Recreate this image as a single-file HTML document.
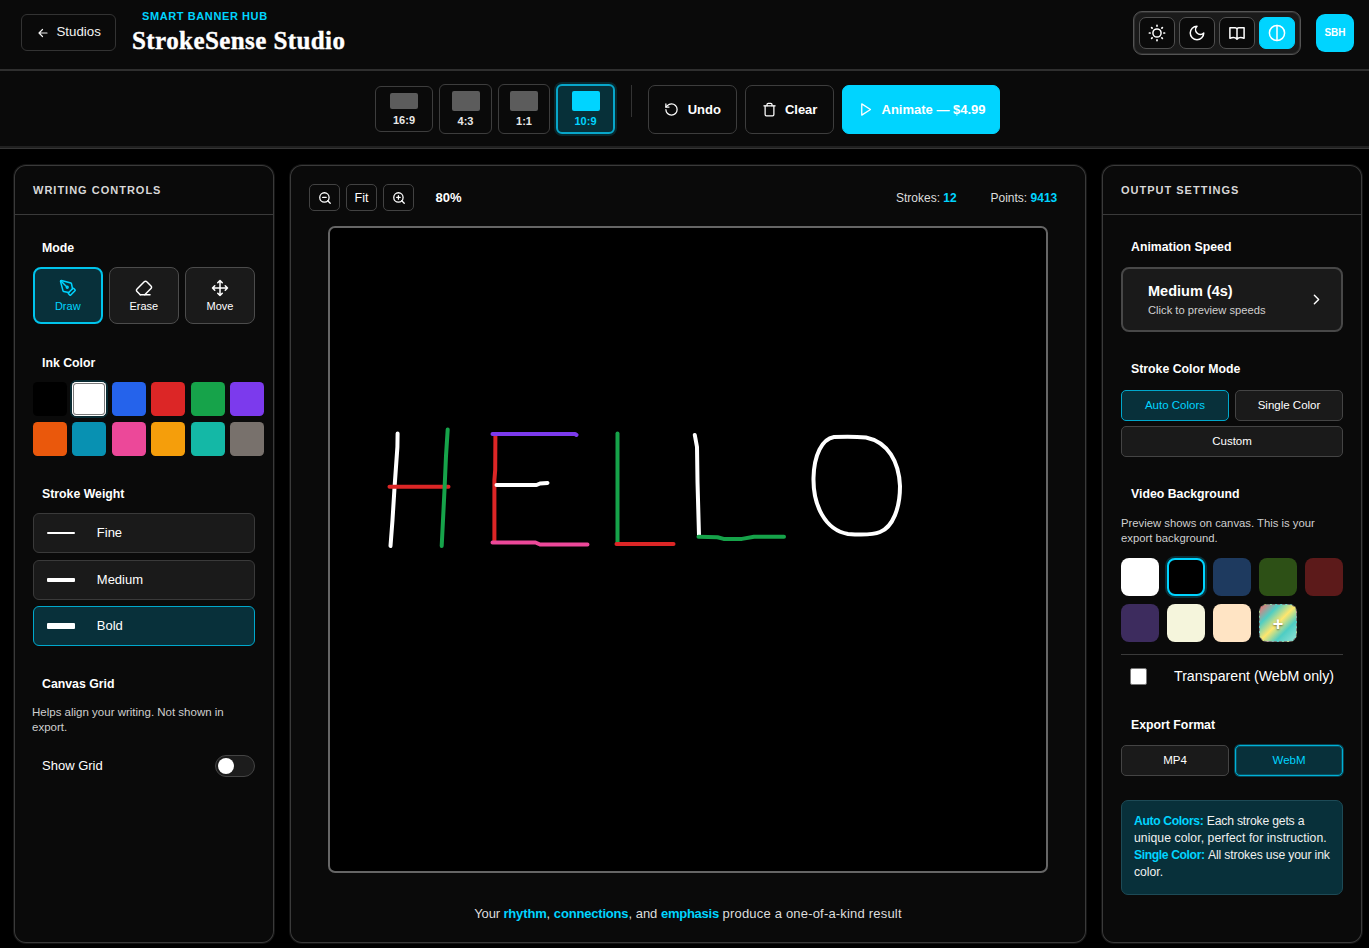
<!DOCTYPE html>
<html><head><meta charset="utf-8">
<style>
*{box-sizing:border-box;margin:0;padding:0}
html,body{width:1369px;height:948px;overflow:hidden;background:#000;color:#fff;font-family:"Liberation Sans",sans-serif;}
.abs{position:absolute}
#hdr{position:absolute;left:0;top:0;width:1369px;height:71px;background:#0a0a0a;border-bottom:2px solid #2f2f2f}
#back{position:absolute;left:21px;top:14px;width:95px;height:37px;border:1px solid #333;border-radius:6px;font-size:13.3px;color:#f2f2f2;line-height:34.6px;padding-left:34.5px}
#back svg{position:absolute;left:15px;top:11.5px}
#brand{position:absolute;left:142px;top:10px;font-size:11px;font-weight:bold;color:#00d4ff;letter-spacing:.6px}
#title{position:absolute;left:132px;top:26px;font-family:"Liberation Serif",serif;font-weight:bold;font-size:25px;letter-spacing:0.42px;color:#fff;-webkit-text-stroke:.4px #fff;top:26.5px}
#themes{position:absolute;left:1133px;top:11px;width:168px;height:44px;border:1px solid #545454;border-radius:9px;background:#1a1a1a;box-shadow:inset 0 0 0 1px #303030}
.tb{position:absolute;top:5px;width:36px;height:32px;border:1px solid #505050;border-radius:7px;background:#0a0a0a}
.tb svg{position:absolute;left:8px;top:6px}
.tb.on{background:#00d4ff;border-color:#00d4ff}
#avatar{position:absolute;left:1316px;top:13.5px;width:38px;height:38px;border-radius:9px;background:#00d4ff;color:#fff;font-size:10px;font-weight:bold;text-align:center;line-height:38px}
#tbar{position:absolute;left:0;top:71px;width:1369px;height:78px;background:#0a0a0a;border-bottom:1px solid #363636;box-shadow:inset 0 -2px 0 #202020}
.ar{position:absolute;top:14px;height:49px;border:1px solid #3d3d3d;border-radius:6px;text-align:center;font-size:11px;font-weight:bold;color:#e8e8e8}
.ar i{position:absolute;left:50%;background:#5c5c5c;border-radius:2px}
.ar span{position:absolute;left:0;right:0;bottom:6px}
.ar.on{border:2px solid #08a6ca;background:#073039;color:#00d4ff;box-shadow:0 0 0 2px rgba(0,212,255,.15)}
.ar.on i{background:#00d4ff}
.btn{position:absolute;top:14px;height:49px;border:1px solid #3d3d3d;border-radius:7px;font-size:13px;font-weight:bold;color:#fff;line-height:47px}
.panel{position:absolute;top:165px;height:778px;box-shadow:inset 0 0 0 1px #3a3a3a,0 0 0 1px #141414;border-radius:12px;background:#0a0a0a}
.ph{position:absolute;left:1px;right:1px;top:0;height:50px;border-bottom:1px solid #3a3a3a;font-size:11px;font-weight:bold;letter-spacing:1.0px;color:#d8d8d8;padding:18.5px 0 0 18px}
.lbl{position:absolute;font-size:12.3px;font-weight:bold;color:#fff}

.mb{position:absolute;top:102px;width:69.5px;height:57px;border:1px solid #4c4c4c;border-radius:8px;background:#1a1a1a;text-align:center;font-size:11px;color:#fff}
.mb svg{position:absolute;left:50%;margin-left:-9px;top:11px}
.mb span{position:absolute;left:0;right:0;top:31px;line-height:14px}
.mb.on{border:2px solid #00c4ec;background:#08303a;color:#00d4ff}
.mb.on svg{top:10px}.mb.on span{top:30px}
.sw{position:absolute;width:34px;height:34px;border-radius:4.5px}
.wb{position:absolute;left:19px;width:222px;height:40px;border:1px solid #3a3a3a;border-radius:6px;background:#1a1a1a;font-size:13px;color:#fff;line-height:38.6px;padding-left:62.8px}
.wb i{position:absolute;left:13px;width:28px;background:#fff;border-radius:1px}
.wb.on{border-color:#00a8cc;background:#08303a}
.help{position:absolute;font-size:11.5px;line-height:15px;color:#cfcfcf}

.zb{position:absolute;top:19px;width:31px;height:27px;border:1px solid #424242;border-radius:5px;font-size:13px;color:#fff;text-align:center;line-height:26px}
.zb svg{position:absolute;left:8px;top:6px}
.stat{position:absolute;top:26px;font-size:12px;color:#ddd;line-height:15px}
.stat b{color:#00d4ff}
#canvas{position:absolute;left:38px;top:61px;width:720px;height:647px;border:2px solid #666;border-radius:7px;background:#000;overflow:hidden}
.ob{position:absolute;height:31px;border:1px solid #444;border-radius:5px;background:#1a1a1a;font-size:11.5px;color:#fff;text-align:center;line-height:29px}
.ob.on{border-color:#00a8cc;background:#08303a;color:#00d4ff}
.bg{position:absolute;width:38px;height:38px;border-radius:8px}
</style></head><body>
<div id="hdr">
 <div id="back"><svg width="12" height="12" viewBox="0 0 24 24" fill="none" stroke="#f2f2f2" stroke-width="2.4" stroke-linecap="round" stroke-linejoin="round"><path d="M20 12H4M11 5l-7 7 7 7"/></svg>Studios</div>
 <div id="brand">SMART BANNER HUB</div>
 <div id="title">StrokeSense Studio</div>
 <div id="themes">
  <div class="tb" style="left:5px"><svg width="18" height="18" viewBox="0 0 18 18" fill="none" stroke="#fff" stroke-width="1.5" stroke-linecap="round" stroke-linejoin="round"><circle cx="9" cy="9" r="4.1"/><path stroke-width="1.7" d="M15.90 9.00L16.60 9.00M13.88 13.88L14.37 14.37M9.00 15.90L9.00 16.60M4.12 13.88L3.63 14.37M2.10 9.00L1.40 9.00M4.12 4.12L3.63 3.63M9.00 2.10L9.00 1.40M13.88 4.12L14.37 3.63"/></svg></div>
  <div class="tb" style="left:45px"><svg width="18" height="18" viewBox="0 0 24 24" fill="none" stroke="#fff" stroke-width="2" stroke-linecap="round" stroke-linejoin="round"><path d="M12 3a6 6 0 0 0 9 9 9 9 0 1 1-9-9Z"/></svg></div>
  <div class="tb" style="left:85px"><svg width="18" height="18" viewBox="0 0 18 18" fill="none" stroke="#fff" stroke-width="1.5" stroke-linecap="round" stroke-linejoin="round"><path d="M9 5.6C9 4.5 8.2 3.8 7.1 3.8H1.9V14.3C4 13.4 7.4 13.3 9 15.2C10.6 13.3 14 13.4 16.1 14.3V3.8H10.9C9.8 3.8 9 4.5 9 5.6V15"/></svg></div>
  <div class="tb on" style="left:125px"><svg width="18" height="18" viewBox="0 0 18 18" fill="none" stroke="#fff" stroke-width="1.5" stroke-linecap="round"><circle cx="9" cy="9" r="7.6"/><path d="M9 1.4v15.2"/></svg></div>
 </div>
 <div id="avatar">SBH</div>
</div>
<div id="tbar">
 <div class="ar" style="left:375px;width:58px;top:15px;height:46px"><i style="width:28px;height:16px;margin-left:-14px;top:6px"></i><span style="bottom:5.5px">16:9</span></div>
 <div class="ar" style="left:439px;width:53px;top:13px;height:50px"><i style="width:28px;height:20px;margin-left:-14px;top:6px"></i><span>4:3</span></div>
 <div class="ar" style="left:498px;width:52px;top:13px;height:50px"><i style="width:28px;height:20px;margin-left:-14px;top:6px"></i><span>1:1</span></div>
 <div class="ar on" style="left:556px;width:59px;top:13px;height:50px"><i style="width:28px;height:20px;margin-left:-14px;top:5px"></i><span style="bottom:5px">10:9</span></div>
 <div style="position:absolute;left:631px;top:14px;width:1px;height:32px;background:#333"></div>
 <div class="btn" style="left:648px;width:89px;padding-left:38.7px"><svg style="position:absolute;left:15.2px;top:16px" width="15" height="15" viewBox="0 0 24 24" fill="none" stroke="#fff" stroke-width="2" stroke-linecap="round" stroke-linejoin="round"><path d="M3 12a9 9 0 1 0 9-9 9.75 9.75 0 0 0-6.74 2.74L3 8"/><path d="M3 3v5h5"/></svg>Undo</div>
 <div class="btn" style="left:745px;width:89px;padding-left:38.9px"><svg style="position:absolute;left:16.2px;top:16px" width="15" height="15" viewBox="0 0 24 24" fill="none" stroke="#fff" stroke-width="2" stroke-linecap="round" stroke-linejoin="round"><path d="M3 6h18"/><path d="M19 6v14c0 1-1 2-2 2H7c-1 0-2-1-2-2V6"/><path d="M8 6V4c0-1 1-2 2-2h4c1 0 2 1 2 2v2"/></svg>Clear</div>
 <div class="btn" style="left:842px;width:158px;padding-left:38.5px;background:#00d4ff;border-color:#00d4ff"><svg style="position:absolute;left:14.9px;top:16px" width="15" height="15" viewBox="0 0 24 24" fill="none" stroke="#fff" stroke-width="2" stroke-linecap="round" stroke-linejoin="round"><polygon points="6 3 20 12 6 21 6 3"/></svg>Animate — $4.99</div>
</div>
<div class="panel" id="lp" style="left:14px;width:260px"><div class="ph">WRITING CONTROLS</div>
 <div class="lbl" style="left:28px;top:75.5px">Mode</div>
 <div class="mb on" style="left:19px"><svg width="18" height="18" viewBox="0 0 24 24" fill="none" stroke="#00d4ff" stroke-width="2" stroke-linecap="round" stroke-linejoin="round"><path d="M15.707 21.293a1 1 0 0 1-1.414 0l-1.586-1.586a1 1 0 0 1 0-1.414l5.586-5.586a1 1 0 0 1 1.414 0l1.586 1.586a1 1 0 0 1 0 1.414z"/><path d="m18 13-1.375-6.874a1 1 0 0 0-.746-.776L3.235 2.028a1 1 0 0 0-1.207 1.207L5.35 15.879a1 1 0 0 0 .776.746L13 18"/><path d="m2.3 2.3 7.286 7.286"/><circle cx="11" cy="11" r="1.2"/></svg><span>Draw</span></div>
 <div class="mb" style="left:95px"><svg width="18" height="18" viewBox="0 0 24 24" fill="none" stroke="#fff" stroke-width="2" stroke-linecap="round" stroke-linejoin="round"><path d="m7 21-4.3-4.3c-1-1-1-2.5 0-3.4l9.6-9.6c1-1 2.5-1 3.4 0l5.6 5.6c1 1 1 2.5 0 3.4L13 21"/><path d="M20 21H7"/></svg><span>Erase</span></div>
 <div class="mb" style="left:171px;width:70px"><svg width="18" height="18" viewBox="0 0 24 24" fill="none" stroke="#fff" stroke-width="2" stroke-linecap="round" stroke-linejoin="round"><path d="M5 9l-3 3 3 3M9 5l3-3 3 3M15 19l-3 3-3-3M19 9l3 3-3 3M2 12h20M12 2v20"/></svg><span>Move</span></div>
 <div class="lbl" style="left:28px;top:190.5px">Ink Color</div>
 <div class="sw" style="left:19px;top:217px;background:#000"></div>
 <div class="sw" style="left:58px;top:217px;background:#fff;box-shadow:inset 0 0 0 1px #fff,inset 0 0 0 2px #7a7a7a,0 0 0 2px rgba(0,212,255,.16)"></div>
 <div class="sw" style="left:98px;top:217px;background:#2563eb"></div>
 <div class="sw" style="left:137px;top:217px;background:#dc2626"></div>
 <div class="sw" style="left:177px;top:217px;background:#16a34a"></div>
 <div class="sw" style="left:216px;top:217px;background:#7c3aed"></div>
 <div class="sw" style="left:19px;top:257px;background:#ea580c"></div>
 <div class="sw" style="left:58px;top:257px;background:#0891b2"></div>
 <div class="sw" style="left:98px;top:257px;background:#ec4899"></div>
 <div class="sw" style="left:137px;top:257px;background:#f59e0b"></div>
 <div class="sw" style="left:177px;top:257px;background:#14b8a6"></div>
 <div class="sw" style="left:216px;top:257px;background:#78716c"></div>
 <div class="lbl" style="left:28px;top:321.5px">Stroke Weight</div>
 <div class="wb" style="top:348px"><i style="top:18px;height:2px"></i>Fine</div>
 <div class="wb" style="top:394.5px"><i style="top:17px;height:4px"></i>Medium</div>
 <div class="wb on" style="top:441px"><i style="top:16px;height:6px"></i>Bold</div>
 <div class="lbl" style="left:28px;top:512px">Canvas Grid</div>
 <div class="help" style="left:18px;top:540px;width:222px">Helps align your writing. Not shown in export.</div>
 <div style="position:absolute;left:28px;top:592.5px;font-size:13px;color:#fff">Show Grid</div>
 <div style="position:absolute;left:201px;top:590px;width:40px;height:22px;border:1px solid #444;border-radius:11px;background:#1c1c1c"><div style="position:absolute;left:2px;top:2px;width:16px;height:16px;border-radius:8px;background:#fff"></div></div>
</div>
<div class="panel" id="cp" style="left:290px;width:796px">
 <div class="zb" style="left:19px"><svg width="14" height="14" viewBox="0 0 24 24" fill="none" stroke="#fff" stroke-width="2.2" stroke-linecap="round" stroke-linejoin="round"><circle cx="11" cy="11" r="8"/><path d="M21 21l-4.35-4.35M8 11h6"/></svg></div>
 <div class="zb" style="left:56px;font-size:12.5px">Fit</div>
 <div class="zb" style="left:93px"><svg width="14" height="14" viewBox="0 0 24 24" fill="none" stroke="#fff" stroke-width="2.2" stroke-linecap="round" stroke-linejoin="round"><circle cx="11" cy="11" r="8"/><path d="M21 21l-4.35-4.35M8 11h6M11 8v6"/></svg></div>
 <div style="position:absolute;left:145.5px;top:25px;font-size:13px;font-weight:bold;color:#fff;line-height:15px">80%</div>
 <div class="stat" style="left:606px">Strokes: <b>12</b></div>
 <div class="stat" style="left:700.5px">Points: <b>9413</b></div>
 <div id="canvas"><svg width="716" height="644" viewBox="330 228 716 644" fill="none" stroke-width="4" stroke-linecap="round" stroke-linejoin="round">
  <path stroke="#fff" d="M397.6 433.5L397.4 447L394.5 488L392.5 520L390.5 546"/>
  <path stroke="#dc2626" d="M389.5 486.7H448.5"/>
  <path stroke="#16a34a" d="M447.7 429.5L446 456L444.5 490L443 520L441.7 546"/>
  <path stroke="#dc2626" d="M495.4 435.5L495.2 470L494.4 480L494.4 541"/>
  <path stroke="#7c3aed" d="M492.5 434H575L576.5 435"/>
  <path stroke="#fff" d="M496.5 485H536.5L540 483.5L547.5 483"/>
  <path stroke="#ec4899" d="M492.5 542.5H535.5L540 544.5L587.5 544.6"/>
  <path stroke="#16a34a" d="M617.5 433.5V543"/>
  <path stroke="#dc2626" d="M616.5 544H673.5"/>
  <path stroke="#fff" d="M694.8 435L697 447L697.5 482L699 535"/>
  <path stroke="#16a34a" d="M698.5 536.8L717.5 537.2L723.6 538.9H742L754 536.8H784"/>
  <path stroke="#fff" d="M834 437C822 439 814 455 813.5 478C813 505 825 530 848 534C862 535 874 534.5 880 532C893 527 900 508 900 486C899 462 888 442 866 437.5C856 436.5 844 436.5 834 437Z"/>
 </svg></div>
 <div style="position:absolute;left:0;right:0;top:741px;text-align:center;font-size:13px;color:#ddd;line-height:16px"><span style="letter-spacing:-.15px">Your </span><b style="color:#00d4ff;letter-spacing:-.15px">rhythm</b>, <b style="color:#00d4ff;letter-spacing:-.18px">connections</b>, and <b style="color:#00d4ff;letter-spacing:-.25px">emphasis</b> <span style="letter-spacing:.19px">produce a one-of-a-kind result</span></div>
</div>
<div class="panel" id="rp" style="left:1102px;width:260px"><div class="ph">OUTPUT SETTINGS</div>
 <div class="lbl" style="left:29px;top:75px">Animation Speed</div>
 <div style="position:absolute;left:19px;top:102px;width:222px;height:65px;border:2px solid #484848;border-radius:8px;background:#1a1a1a">
  <div style="position:absolute;left:25px;top:12.5px;font-size:14.5px;font-weight:bold;color:#fff;line-height:18px">Medium (4s)</div>
  <div style="position:absolute;left:25px;top:34px;font-size:11.2px;color:#d0d0d0;line-height:14px">Click to preview speeds</div>
  <svg style="position:absolute;left:184.5px;top:22px" width="17" height="17" viewBox="0 0 24 24" fill="none" stroke="#fff" stroke-width="2" stroke-linecap="round" stroke-linejoin="round"><path d="m9 18 6-6-6-6"/></svg>
 </div>
 <div class="lbl" style="left:29px;top:197.3px">Stroke Color Mode</div>
 <div class="ob on" style="left:19px;top:225px;width:108px">Auto Colors</div>
 <div class="ob" style="left:133px;top:225px;width:108px">Single Color</div>
 <div class="ob" style="left:19px;top:261px;width:222px">Custom</div>
 <div class="lbl" style="left:29px;top:321.8px">Video Background</div>
 <div class="help" style="left:19px;top:350.5px;width:222px;line-height:15.4px;font-size:11.3px;white-space:nowrap">Preview shows on canvas. This is your<br>export background.</div>
 <div class="bg" style="left:19px;top:393px;background:#fff"></div>
 <div class="bg" style="left:65px;top:393px;background:#000;border:2px solid #00d4ff;box-shadow:0 0 0 2px rgba(0,212,255,.2)"></div>
 <div class="bg" style="left:111px;top:393px;background:#1e3a5f"></div>
 <div class="bg" style="left:157px;top:393px;background:#2d5016"></div>
 <div class="bg" style="left:203px;top:393px;background:#5c1a1a"></div>
 <div class="bg" style="left:19px;top:439px;background:#3d2c5e"></div>
 <div class="bg" style="left:65px;top:439px;background:#f5f5dc"></div>
 <div class="bg" style="left:111px;top:439px;background:#ffe4c4"></div>
 <div class="bg" style="left:157px;top:439px;background:linear-gradient(135deg,#ff6b6b 0%,#4ecdc4 26%,#ffe66d 50%,#4ecdc4 72%,#95e1d3 100%);border:1px dashed #777;color:#fff;font-size:18px;font-weight:bold;text-align:center;line-height:39px;text-shadow:0 1px 2px rgba(0,0,0,.5)">+</div>
 <div style="position:absolute;left:19px;top:489px;width:222px;height:1px;background:#3a3a3a"></div>
 <div style="position:absolute;left:28px;top:503px;width:17px;height:17px;background:#fff;border:1px solid #777;border-radius:2px"></div>
 <div style="position:absolute;left:72px;top:503px;font-size:14.2px;color:#fff;line-height:17px">Transparent (WebM only)</div>
 <div class="lbl" style="left:29px;top:552.8px">Export Format</div>
 <div class="ob" style="left:19px;top:580px;width:108px">MP4</div>
 <div class="ob on" style="left:133px;top:580px;width:108px;border-color:#00b0d6;box-shadow:0 0 0 1px rgba(0,176,214,.35),inset 0 0 0 1px rgba(0,176,214,.25)">WebM</div>
 <div style="position:absolute;left:19px;top:635px;width:222px;height:95px;border:1px solid #1d4a56;border-radius:7px;background:#08303a;padding:11.5px 12px;font-size:12.2px;line-height:17.3px;white-space:nowrap;color:#f0f0f0"><b style="color:#00d4ff;letter-spacing:-.37px">Auto Colors:</b> <span style="letter-spacing:-.19px">Each stroke gets a</span><br><span style="letter-spacing:.08px">unique color, perfect for instruction.</span><br><b style="color:#00d4ff;letter-spacing:-.4px">Single Color:</b> <span style="letter-spacing:-.15px">All strokes use your ink</span><br>color.</div>
</div>
</body></html>
